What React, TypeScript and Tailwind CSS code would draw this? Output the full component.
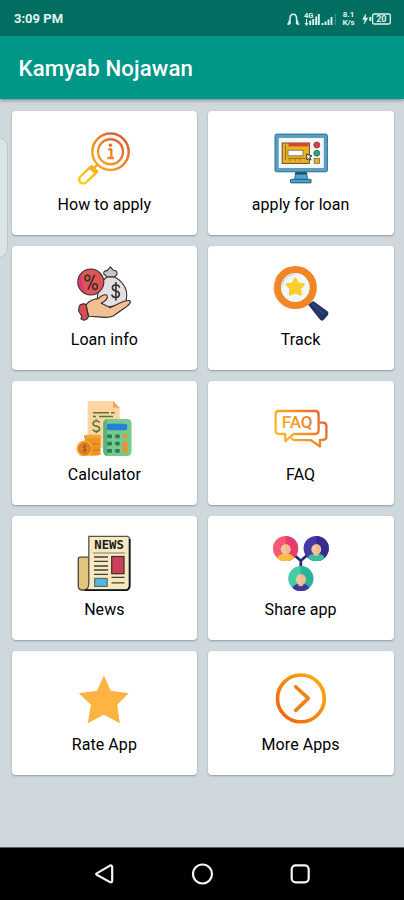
import type { ReactNode } from "react";

function Icon({ children }: { children: ReactNode }) {
  return (
    <svg className="h-14 w-14 shrink-0" viewBox="0 0 56 56" fill="none" aria-hidden="true">
      {children}
    </svg>
  );
}

function HowToApplyIcon() {
  return (
    <Icon>
      <defs>
        <linearGradient id="lens" gradientUnits="userSpaceOnUse" x1="3" y1="53" x2="50" y2="6">
          <stop offset="0" stopColor="#fdd21c" />
          <stop offset="0.45" stopColor="#f5a11f" />
          <stop offset="1" stopColor="#dd5333" />
        </linearGradient>
      </defs>
      <g stroke="url(#lens)" strokeWidth="2.4" strokeLinejoin="round">
        <circle cx="34.5" cy="21.7" r="18.2" />
        <circle cx="34.5" cy="21.7" r="12.5" />
        <path d="M21.5 34.7 L18.5 37.7 M13.7 37.6 L19.6 43.4 L10.4 52.2 Q7.2 54.4 4.4 52.4 Q2 49.8 4.2 46.8 Z M13.7 37.6 L15.7 36.2 L21 41.4 L19.6 43.4" />
        <path d="M32 19.3 H35.3 V27.6 M31.3 28 H38" strokeWidth="2.3" />
      </g>
      <circle cx="34.4" cy="15.2" r="1.7" fill="#e36b30" />
    </Icon>
  );
}

function MonitorIcon() {
  return (
    <Icon>
      <path d="M22.6 42 H33.6 L34.6 49.5 H21.6 Z" fill="#4ea3d2" stroke="#2c5f7b" strokeWidth="0.8" />
      <path d="M22.6 42 H33.6 L34 44.5 H22.2Z" fill="#244c60" />
      <rect x="17.5" y="49.3" width="20.6" height="3.6" rx="0.6" fill="#46a1cd" stroke="#25536a" strokeWidth="0.9" />
      <rect x="2" y="4.1" width="52.4" height="37.7" rx="1.6" fill="#50a3c8" stroke="#316f8e" strokeWidth="1" />
      <rect x="5.2" y="7.4" width="46" height="31" fill="#f3f6fb" stroke="#5d8395" strokeWidth="0.7" />
      <rect x="9.2" y="13" width="27.2" height="20.4" fill="#e8b323" stroke="#6e4b20" strokeWidth="1" />
      <rect x="15.5" y="13" width="20" height="3.4" fill="#d8452f" />
      <path d="M12.5 14.6 V30 M15.2 28.4 H33 M17 30.8 V28.4 M22 30.8 V28.4 M27 30.8 V28.4" stroke="#9b701c" strokeWidth="1" />
      <rect x="15" y="20.2" width="15" height="5.6" fill="#fff" stroke="#896e4b" strokeWidth="0.9" />
      <circle cx="43.8" cy="15" r="3" fill="#d9413d" stroke="#7b3430" strokeWidth="0.7" />
      <circle cx="43.8" cy="23.2" r="3" fill="#33a36b" stroke="#286a49" strokeWidth="0.7" />
      <rect x="41.2" y="28.5" width="5.2" height="4.8" fill="#e3b433" stroke="#816326" strokeWidth="0.8" />
      <path d="M33.5 24 L39 26 L36.7 27 L38 30 L35.5 28.5 L34 30Z" fill="#fff" stroke="#222" strokeWidth="0.9" />
    </Icon>
  );
}

function LoanIcon() {
  return (
    <Icon>
      <g stroke="#34302f" strokeWidth="1.1" strokeLinejoin="round" strokeLinecap="round">
        <path d="M30.5 12 C25 17 21.5 25 21.2 34 L28 43 L49 38.5 C54 27 48 17 38.5 12 Z" fill="#e5dfe3" />
        <path d="M30.7 11.6 L27.8 9 Q27.2 5.4 31.2 5.6 L34.4 1.8 L37.4 5.3 Q41.6 5.4 41 9.2 L38.8 11.8 Z" fill="#c9c6ca" />
        <circle cx="14.8" cy="17" r="13" fill="#df5456" />
        <path d="M10 39.8 C13 36 17.5 34 22.3 33.6 C26 29.5 30 28.8 31.2 30.8 C32 33.4 28.8 36.3 25.2 38.2 L34 42.6 C39.7 41 46.8 34.8 53.4 35.5 C56 37.3 52.8 39.7 50 42 L37.2 51 C31.3 54.2 22.6 51.2 12.6 51.2 Z" fill="#f1c193" />
        <path d="M4 40 Q8.4 37.7 10 40 L12.3 51.3 Q12 54.8 7.9 55.2 L4.8 53.8 Q7 51 4.4 49 Q1 45 4 40Z" fill="#dc4b58" />
        <path d="M18.4 10.3 L12.3 24" strokeWidth="1.6" />
        <ellipse cx="11.4" cy="13" rx="2.4" ry="2.8" strokeWidth="1.5" />
        <ellipse cx="19" cy="21.6" rx="2.4" ry="2.8" strokeWidth="1.5" />
        <path d="M43.4 22 Q42.5 19.7 39.5 19.8 Q36.3 20.1 36.4 22.9 Q36.6 25.3 40 26 Q43.5 26.7 43.4 29.6 Q43 32.5 39.6 32.5 Q36.5 32.3 36 30 M39.9 17.5 V35" strokeWidth="1.6" />
      </g>
      <path d="M3 20 A12.4 12.4 0 0 1 6.5 8 C4.7 14.5 5.7 22 10.5 28 Q4.7 26 3 20Z" fill="#df357a" />
    </Icon>
  );
}

function TrackIcon() {
  return (
    <Icon>
      <path d="M35 39.5 L40.3 36 L54.2 46.1 Q56.5 48 54.4 50.8 L50.8 54.8 Q48.7 57 46.7 54.3 Z" fill="#213568" />
      <path d="M39 39 L51 49" stroke="#334c82" strokeWidth="1.4" />
      <circle cx="22.3" cy="22.5" r="18" fill="#f1f6f6" stroke="#f28525" strokeWidth="7.2" />
      <path d="M3.6 14 A20.4 20.4 0 0 0 5 35" stroke="#f5a16f" strokeWidth="1.3" />
      <path d="M9.1 22.5 A13.3 13.3 0 0 1 22.3 9.2" stroke="#c6e0e7" strokeWidth="1.5" />
      <path d="M22.3 13.7 L24.9 18.6 L30.7 19.5 L26.8 23.7 L27.7 29.4 L22.3 27.1 L17 29.4 L17.7 23.7 L13.8 19.5 L19.6 18.6 Z" fill="#fccd2f" stroke="#fccd2f" strokeWidth="2.4" strokeLinejoin="round" />
    </Icon>
  );
}

function CalculatorIcon() {
  return (
    <Icon>
      <path d="M13.3 1 H37 L43.7 7.8 V48 H11.7 V3 Q11.7 1 13.3 1Z" fill="#ffd4a3" />
      <path d="M37 1 L43.7 7.8 H37Z" fill="#efa45b" />
      <path d="M17 12.7 H33 M35 12.7 H38.5 M17 16.5 H20 M23 16.5 H37" stroke="#557b2d" strokeWidth="1.5" />
      <path d="M23.6 22.7 Q22.7 20.9 20.2 21 Q17.1 21.2 17.1 23.7 Q17.2 25.7 20.3 26.1 Q23.6 26.7 23.6 29 Q23.4 31.4 20.4 31.4 Q17.4 31.3 16.9 29.4 M20.3 19.2 V21 M20.3 31.2 V33.2" stroke="#597d35" strokeWidth="1.7" />
      <path d="M8.8 35 H24.5 V54.7 Q19 56.8 9 55Z" fill="#ee9425" />
      <path d="M8 35.2 Q15 33.8 24.5 35.2 V38.1 H8Z" fill="#f5a630" />
      <path d="M16 44 H24 M16 50 H24" stroke="#d96e1d" strokeWidth="1.2" />
      <circle cx="8.6" cy="48.6" r="8.1" fill="#f6a532" />
      <circle cx="8.6" cy="48.6" r="5.5" fill="#e98225" stroke="#ba671e" />
      <path d="M10.7 46.2 Q7 44.7 7 47.4 Q10.5 48.3 10.2 50.3 Q8 52.3 6.3 50.2 M8.7 44.7 V52.4" stroke="#9d5721" />
      <rect x="27.3" y="19" width="28.2" height="37" rx="4.2" fill="#77c98d" />
      <path d="M31 19 Q27.3 20 27.3 24 V52 Q28 55.4 31.4 56Z" fill="#58b37e" />
      <rect x="31" y="23.7" width="20.2" height="6.5" rx="1.8" fill="#287edb" />
      <g fill="#297b54">
        <rect x="31.2" y="34.5" width="4.8" height="3.8" rx="0.8" /><rect x="39.2" y="34.5" width="4.5" height="3.8" rx="0.8" />
        <rect x="31.2" y="41.8" width="4.8" height="3.8" rx="0.8" /><rect x="39.2" y="41.8" width="4.5" height="3.8" rx="0.8" />
        <rect x="31.2" y="49" width="4.8" height="3.8" rx="0.8" /><rect x="39.2" y="49" width="4.5" height="3.8" rx="0.8" />
      </g>
      <rect x="46.7" y="34.5" width="4.7" height="3.8" rx="0.8" fill="#f0912d" />
      <rect x="46.7" y="41.5" width="4.7" height="11.6" rx="0.8" fill="#f0912d" />
    </Icon>
  );
}

function FaqIcon() {
  return (
    <Icon>
      <defs>
        <linearGradient id="faq" gradientUnits="userSpaceOnUse" x1="4" y1="40" x2="50" y2="12">
          <stop offset="0" stopColor="#fbc22b" />
          <stop offset="0.5" stopColor="#f19426" />
          <stop offset="1" stopColor="#e65e31" />
        </linearGradient>
      </defs>
      <g stroke="url(#faq)" strokeWidth="2.3" strokeLinejoin="round">
        <path d="M5.5 11 H42 Q45.6 11 45.6 14.5 V30.5 Q45.6 34 42 34 H20.5 L12.3 41.2 V34 H6 Q2.6 34 2.6 30.5 V14.5 Q2.6 11 5.5 11Z" />
        <path d="M46.3 22.7 H50 Q53.4 22.7 53.4 26.2 V36.5 Q53.4 39.8 50 39.8 H47 V46.5 L38 40.2 H22 Q19 40.2 18.1 37.5" />
      </g>
      <text x="8.8" y="27.8" textLength="30.8" lengthAdjust="spacingAndGlyphs" fill="url(#faq)" className="font-['Roboto',sans-serif] text-[17px] font-medium">FAQ</text>
    </Icon>
  );
}

function NewsIcon() {
  return (
    <Icon>
      <path d="M2.3 24 Q2.3 22.2 4.3 22.2 H13 V55 H5.7 Q2.3 54.5 2.3 51Z" fill="#e3c57b" stroke="#4a4538" strokeWidth="1.3" />
      <path d="M12.8 1.4 H51.4 Q53.7 2 53.7 4 V51.6 Q53.2 55 50 55.2 H8 Q12.8 54 12.8 49Z" fill="#f7e8c0" stroke="#55544c" strokeWidth="1.3" />
      <path d="M53.6 4 V51 Q53 55 49.7 55.2 H9" stroke="#111719" strokeWidth="1.8" />
      <text x="18.3" y="13.6" textLength="29.5" lengthAdjust="spacingAndGlyphs" fill="#181a1b" className="font-['DejaVu_Sans_Mono',monospace] text-[11.5px] font-bold">NEWS</text>
      <path d="M17 18 H49" stroke="#9b947e" strokeWidth="1.3" />
      <path d="M18 22 H32 M18 26.4 H32 M18 31 H32 M18 35 H32 M18 39.4 H32 M35.5 42.4 H48.5 M35.5 47.8 H48.5" stroke="#403f37" strokeWidth="1.3" />
      <rect x="35.7" y="21.5" width="12.3" height="17.2" fill="#cc405e" stroke="#43282c" strokeWidth="1.2" />
      <rect x="18.7" y="43.4" width="12.5" height="8" fill="#50b5df" stroke="#4e676b" strokeWidth="1.1" />
    </Icon>
  );
}

type PersonProps = { x: number; y: number; color: string; shade: string; shirt: string; clip: string };

function Person({ x, y, color, shade, shirt, clip }: PersonProps) {
  return (
    <g transform={`translate(${x} ${y})`}>
      <clipPath id={clip}><circle r="12.6" /></clipPath>
      <circle r="12.6" fill={color} />
      <g clipPath={`url(#${clip})`}>
        <path d="M0 -13 H13 V13 H0Z" fill={shade} />
        <path d="M-8.5 14 V10 Q-7.5 5.5 -2 5.5 H2 Q7.5 5.5 8.5 10 V14Z" fill={shirt} />
      </g>
      <path d="M-2.6 3 H2.6 V6.6 Q0 8.6 -2.6 6.6Z" fill="#efb982" />
      <ellipse cy="0.8" rx="4.9" ry="5.1" fill="#f6c599" />
      <path d="M0 -4.3 Q4.9 -4 4.9 0.8 Q4.9 5.6 0 5.9Z" fill="#efbb8f" />
    </g>
  );
}

function ShareIcon() {
  return (
    <Icon>
      <path d="M20 19 L27.8 25.8 L35.5 19 M27.8 25 V34" stroke="#2b267d" strokeWidth="2.7" />
      <Person x={12.6} y={13.5} color="#f85776" shade="#e43f6c" shirt="#fbbd31" clip="member-a" />
      <Person x={43.2} y={13.5} color="#4638a5" shade="#352d8b" shirt="#38bfa3" clip="member-b" />
      <Person x={27.8} y={43.6} color="#43cda9" shade="#2bb397" shirt="#433799" clip="member-c" />
    </Icon>
  );
}

function RateIcon() {
  return (
    <Icon>
      <path d="M27.9 5.5 L34.7 20.8 L52.7 23.2 L41.3 34.8 L43.8 53.2 L27.9 44.7 L11.7 53.2 L15 34.8 L2.8 23.2 L21 20.8 Z" fill="#ffb342" />
    </Icon>
  );
}

function MoreIcon() {
  return (
    <Icon>
      <defs>
        <linearGradient id="more" x1="0" y1="1" x2="1" y2="0">
          <stop offset="0" stopColor="#f05e12" />
          <stop offset="1" stopColor="#ffb010" />
        </linearGradient>
      </defs>
      <circle cx="27.9" cy="28.4" r="23.4" stroke="url(#more)" strokeWidth="3.6" />
      <path d="M22.7 16.8 L35.3 28.4 L22.7 40.4" stroke="#ee8119" strokeWidth="3.6" strokeLinecap="round" strokeLinejoin="round" />
    </Icon>
  );
}

const items = [
  { label: "How to apply", icon: <HowToApplyIcon /> },
  { label: "apply for loan", icon: <MonitorIcon /> },
  { label: "Loan info", icon: <LoanIcon /> },
  { label: "Track", icon: <TrackIcon /> },
  { label: "Calculator", icon: <CalculatorIcon /> },
  { label: "FAQ", icon: <FaqIcon /> },
  { label: "News", icon: <NewsIcon /> },
  { label: "Share app", icon: <ShareIcon /> },
  { label: "Rate App", icon: <RateIcon /> },
  { label: "More Apps", icon: <MoreIcon /> },
];

function StatusBar() {
  return (
    <div className="flex h-9 shrink-0 items-center justify-between bg-[#006f61] pt-px pr-3 pl-3.5 text-[#e0f2ee]">
      <span className="pt-px text-[13px] font-bold">3:09 PM</span>
      <div className="flex items-center">
        <svg className="h-4 w-[53px]" viewBox="0 0 53 16" fill="none" stroke="currentColor" aria-hidden="true">
          <path d="M4 13 V8 Q4 3.2 7.3 3.2 Q10.6 3.2 10.6 8 V13" strokeWidth="1.5" />
          <path d="M3.2 9.5 V13.5 M11.4 9.5 V13.5 M1.3 13 H4 M10.6 13 H13.3" strokeWidth="1.7" />
          <path d="M24.2 14 V9.5 M27.2 14 V8 M30.2 14 V5.5 M32.8 14 V3 M36.5 14 V12 M39.5 14 V10.5 M42.5 14 V8.5 M45.5 14 V6" strokeWidth="1.9" />
          <path d="M20.5 8 V14 M19 12 L20.5 14 L22 12" strokeWidth="1.1" />
          <path d="M49.3 3 V14" strokeWidth="0.7" opacity="0.5" />
          <text x="18" y="7" stroke="none" fill="currentColor" className="text-[7.5px] font-bold">4G</text>
        </svg>
        <div className="mr-1.5 ml-0.5 flex w-[15px] flex-col items-center text-[8px] leading-[9.5px] font-bold">
          <span className="h-2 leading-2">8.1</span>
          <span className="h-2 leading-2">K/s</span>
        </div>
        <svg className="h-3 w-[30px]" viewBox="0 0 30 12" fill="none" stroke="currentColor" aria-hidden="true">
          <path d="M3.7 1 L0.7 6.5 H3 L2 11 L5.8 5 H3.4Z" fill="currentColor" strokeWidth="0.5" />
          <path d="M8.3 4 V8" strokeWidth="2" />
          <rect x="10.6" y="1" width="17.7" height="10" rx="1.5" strokeWidth="1.3" />
          <text x="14.2" y="9" stroke="none" fill="currentColor" className="text-[9px] font-bold">20</text>
        </svg>
      </div>
    </div>
  );
}

export default function App() {
  return (
    <div className="flex h-[900px] w-[404px] flex-col overflow-hidden bg-[#cfd8dc] font-['Roboto',sans-serif] text-black">
      <StatusBar />
      <header className="z-10 flex h-[63px] shrink-0 items-center bg-[#009688] pt-[3px] pl-[18.5px] shadow-[0_1px_4px_rgba(40,50,70,0.55)]">
        <h1 className="text-[22.2px] font-medium tracking-[0.14px] text-white">Kamyab Nojawan</h1>
      </header>
      <main className="relative flex-1 pt-3 pr-[10.5px] pl-[11.5px]">
        <div className="absolute top-[38px] -left-4 h-[121px] w-6 rounded-[10px] border border-[#b9c6c9] bg-[#dde4e6]" />
        <div className="relative grid grid-cols-2 gap-x-[10.5px] gap-y-[11px]">
          {items.map((item) => (
            <button key={item.label} className="flex h-[124px] flex-col items-center rounded-[4px] bg-white pt-[19px] shadow-[0_1px_2px_rgba(50,65,75,0.4)]">
              {item.icon}
              <span className="mt-[7px] text-[16px] leading-6 tracking-[0.07px]">{item.label}</span>
            </button>
          ))}
        </div>
      </main>
      <nav className="flex h-[53px] shrink-0 items-center justify-center gap-[74px] border-t border-[#555c60] bg-black">
        <svg className="h-6 w-6" viewBox="0 0 24 24" fill="none" stroke="#f5f5f5" strokeWidth="2.2" strokeLinejoin="round"><path d="M4.7 11.4 Q3.6 12 4.7 12.8 L18 20.1 Q20.2 20.8 20.2 18.6 V5.6 Q20.2 2.9 18 3.6Z" /></svg>
        <svg className="h-6 w-6" viewBox="0 0 24 24" fill="none" stroke="#f5f5f5" strokeWidth="2.2"><circle cx="12.5" cy="12" r="9.5" /></svg>
        <svg className="h-6 w-6" viewBox="0 0 24 24" fill="none" stroke="#f5f5f5" strokeWidth="2.2"><rect x="3.7" y="3.3" width="17" height="17" rx="4" /></svg>
      </nav>
    </div>
  );
}
